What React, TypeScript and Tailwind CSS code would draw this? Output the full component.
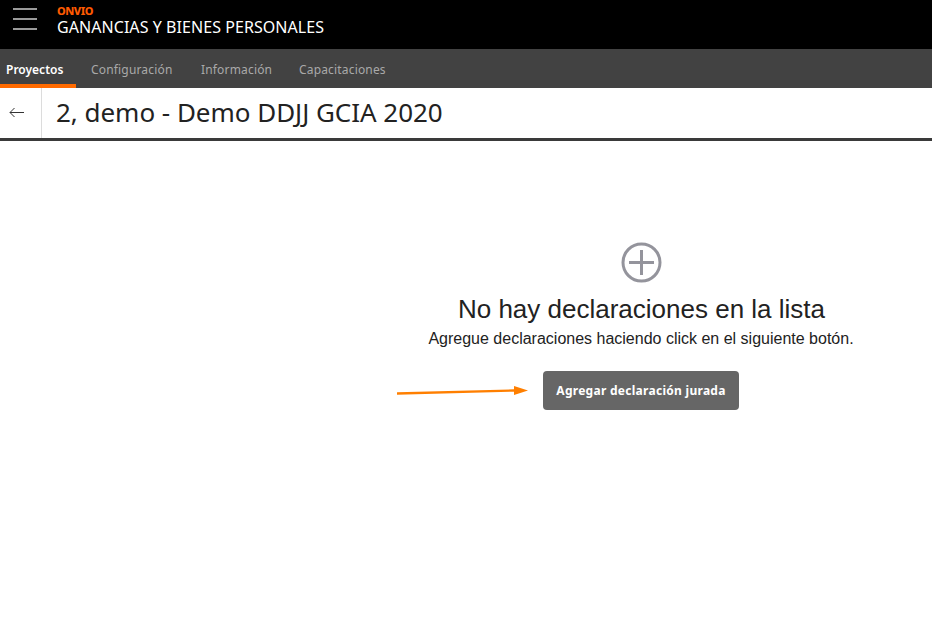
const knowledge = "font-['Noto_Sans',sans-serif]";

function TopBar() {
  return (
    <div className="bg-black h-[49px] flex items-start shrink-0">
      <div className="w-[57px] shrink-0 pl-[13px] pt-[8px] flex flex-col gap-[8px]">
        <div className="h-[2px] w-[24px] bg-[#9a9a9a]" />
        <div className="h-[2px] w-[24px] bg-[#9a9a9a]" />
        <div className="h-[2px] w-[24px] bg-[#9a9a9a]" />
      </div>
      <div className={`${knowledge} pt-[4px]`}>
        <p className="text-[#ff5a00] text-[11px] font-extrabold leading-[13px] tracking-[-0.5px]">ONVIO</p>
        <p className="text-white text-[16px] leading-[20px] tracking-[0.06px]">GANANCIAS Y BIENES PERSONALES</p>
      </div>
    </div>
  );
}

function NavTab({ label, active, className }: { label: string; active?: boolean; className: string }) {
  return (
    <div className={`${className} h-full flex items-center justify-start ${active ? "border-b-4 border-[#ff6a00] pt-[4px] text-white font-semibold" : "text-[#a9a9a9] tracking-[0.17px]"}`}>
      <span className={`${knowledge} text-[12px] leading-[16px] mt-[3px]`}>{label}</span>
    </div>
  );
}

function NavBar() {
  return (
    <div className="bg-[#424242] h-[39px] flex shrink-0">
      <NavTab label="Proyectos" active className="w-[76px] pl-[6px]" />
      <NavTab label="Configuración" className="w-[110px] pl-[15px]" />
      <NavTab label="Información" className="w-[98px] pl-[15px]" />
      <NavTab label="Capacitaciones" className="w-[110px] pl-[15px]" />
    </div>
  );
}

function TitleBar() {
  return (
    <div className="h-[53px] flex shrink-0 border-b-[3px] border-[#3a3a3a] bg-white">
      <div className="w-[42px] shrink-0 border-r border-[#dcdcdc] flex items-center pl-[9px] pb-[1px]">
        <svg width="15" height="11" viewBox="0 0 15 11" fill="none" stroke="#333" strokeWidth="1">
          <path d="M15 5.5H1M5.5 1L1 5.5L5.5 10" />
        </svg>
      </div>
      <h1 className={`${knowledge} pl-[14px] text-[26px] leading-[49px] text-[#222] tracking-[-0.03px]`}>2, demo - Demo DDJJ GCIA 2020</h1>
    </div>
  );
}

function EmptyState() {
  return (
    <div className="flex flex-col items-center pl-[351px] pt-[101px]">
      <svg width="41" height="41" viewBox="0 0 41 41" fill="none" stroke="#94949c" strokeWidth="3">
        <circle cx="20.5" cy="20.5" r="18.5" />
        <path d="M20.5 8V33M8 20.5H33" />
      </svg>
      <h2 className="font-['Liberation_Sans',sans-serif] text-[26px] leading-[30px] text-[#222] mt-[11px]">No hay declaraciones en la lista</h2>
      <p className="font-['Liberation_Sans',sans-serif] text-[16px] leading-[20px] text-[#222] mt-[5px] -ml-px">Agregue declaraciones haciendo click en el siguiente botón.</p>
      <button className={`${knowledge} mt-[22px] h-[39px] w-[196px] -ml-px rounded-[4px] bg-[#666] text-white text-[12px] font-bold tracking-[0.28px]`}>Agregar declaración jurada</button>
    </div>
  );
}

export default function App() {
  return (
    <div className="relative w-[932px] h-[642px] bg-white overflow-hidden flex flex-col">
      <TopBar />
      <NavBar />
      <TitleBar />
      <EmptyState />
      {/* orange annotation arrow drawn over the page */}
      <svg className="absolute left-[396px] top-[384px]" width="134" height="14" viewBox="0 0 134 14">
        <path d="M1 9.5L118 6.5" stroke="#ff7f00" strokeWidth="2.4" />
        <path d="M118 2L132 6.5L118 11Z" fill="#ff7f00" />
      </svg>
    </div>
  );
}
